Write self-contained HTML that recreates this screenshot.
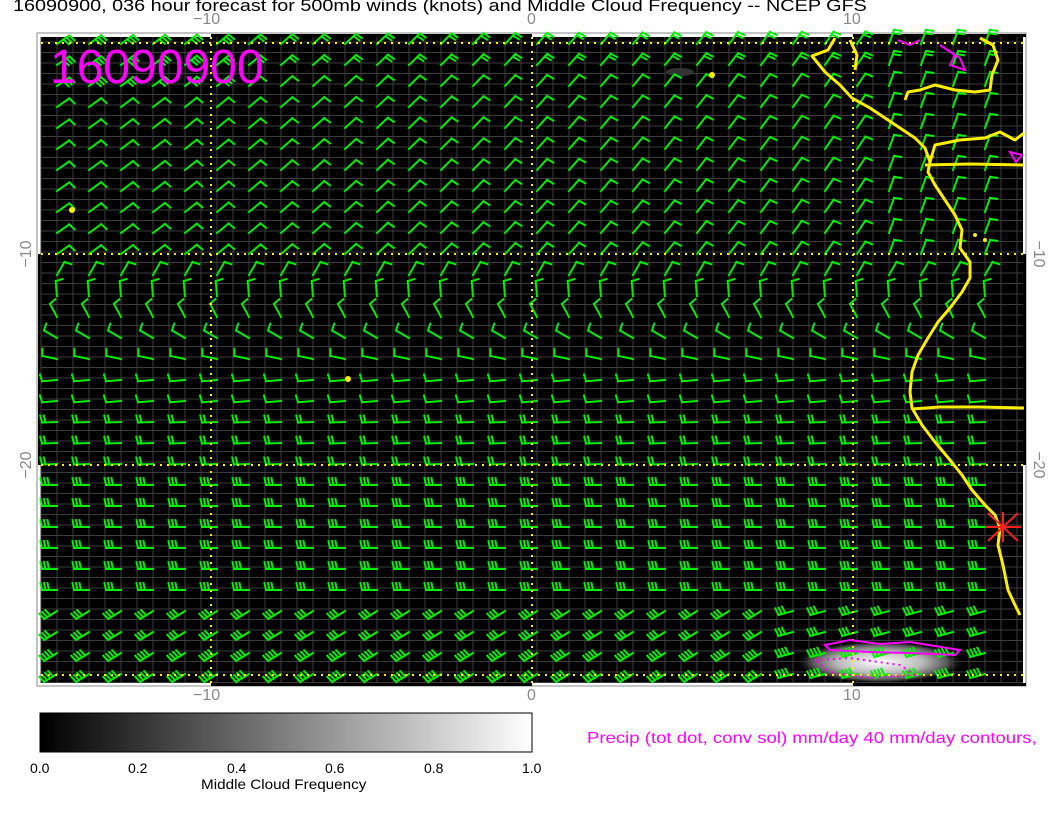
<!DOCTYPE html>
<html><head><meta charset="utf-8"><style>
html,body{margin:0;padding:0;background:#fff;width:1056px;height:816px;overflow:hidden;font-family:"Liberation Sans",sans-serif}
.t{position:absolute;white-space:nowrap;color:#000;transform-origin:0 0}
.g{color:#888}
</style></head><body>
<svg id="s" width="1056" height="816" style="position:absolute;left:0;top:0" xmlns="http://www.w3.org/2000/svg">
<defs>
<radialGradient id="cl" cx="50%" cy="55%" r="50%">
<stop offset="0" stop-color="#fff"/><stop offset="0.5" stop-color="#bbb"/><stop offset="0.8" stop-color="#555"/><stop offset="1" stop-color="#000" stop-opacity="0"/>
</radialGradient>
<linearGradient id="cb" x1="0" x2="1"><stop offset="0" stop-color="#000"/><stop offset="1" stop-color="#fff"/></linearGradient>
</defs>
<rect x="37" y="33" width="989" height="653" fill="#fff" stroke="#888" stroke-width="1"/>
<g fill="#000">
<rect x="211" y="34" width="321" height="3"/><rect x="853" y="34" width="173" height="3"/>
<rect x="211" y="683" width="321" height="3"/><rect x="853" y="683" width="173" height="3"/>
<rect x="38" y="254" width="3" height="211"/><rect x="1023" y="254" width="3" height="211"/>
</g>
<rect x="41" y="37" width="982" height="646" fill="#000"/>
<g id="grid" stroke="#3c3c3c" stroke-width="1"></g>
<ellipse cx="880" cy="660" rx="85" ry="22" fill="url(#cl)"/>
<ellipse cx="680" cy="72" rx="14" ry="4" fill="#333"/>
<g id="barbs" stroke="#00ee00" stroke-width="2" fill="none" stroke-linecap="square"></g>
<g stroke="#ffee00" stroke-width="2" stroke-dasharray="2,5" fill="none">
<line x1="211" y1="37" x2="211" y2="683"/><line x1="532" y1="37" x2="532" y2="683"/><line x1="853" y1="37" x2="853" y2="683"/>
<line x1="41" y1="43" x2="1023" y2="43"/><line x1="41" y1="254" x2="1023" y2="254"/><line x1="41" y1="465" x2="1023" y2="465"/><line x1="41" y1="675" x2="1023" y2="675"/>
</g>
<g stroke="#ffee00" stroke-width="3" fill="none" stroke-linejoin="round">
<path d="M835 38 L828 50 L812 56 L825 72 L840 85 L852 98 L870 108 L885 118 L900 128 L915 138 L925 148 L930 162 L928 172 L935 185 L945 200 L955 215 L962 230 L960 248 L970 262 L970 278 L962 292 L950 308 L938 322 L928 338 L918 355 L912 372 L910 392 L912 408 L922 425 L935 442 L950 460 L962 475 L972 490 L985 505 L995 515 L1000 528 L998 545 L1003 565 L1008 590 L1015 605 L1020 615"/>
<path d="M912 409 L940 407 L980 407 L1024 408"/>
<path d="M925 165 L970 164 L1024 165"/>
<path d="M930 162 L935 145 L960 140 L985 138 L1000 132 L1015 140 L1024 133"/>
<path d="M905 100 L908 92 L920 90 L935 85 L955 90 L975 92 L990 90 L992 75 L998 60 L993 45 L980 38"/>
<path d="M850 40 L857 55 L855 70"/>
</g>
<g fill="#ffee00"><circle cx="72" cy="210" r="3"/><circle cx="348" cy="379" r="3"/><circle cx="712" cy="75" r="3"/><circle cx="975" cy="235" r="2"/><circle cx="985" cy="240" r="2"/></g>
<g stroke="#ff00ff" stroke-width="2" fill="none">
<path d="M898 40 L910 45 L920 40"/><path d="M940 45 L955 55 L950 65 L965 70 L960 58 L948 50"/>
<path d="M1010 152 L1022 155 L1016 162 Z"/>
<path d="M825 645 L850 640 L880 644 L910 642 L935 646 L960 650 L955 655 L910 653 L870 652 L830 650 Z"/>
</g>
<g stroke="#ff00ff" stroke-width="2" stroke-dasharray="2,4" fill="none">
<path d="M815 660 L850 658 L900 665 L915 675 L870 678 L830 672 Z"/>
</g>
<g stroke="#ff2020" stroke-width="2"><line x1="988" y1="513" x2="1018" y2="541"/><line x1="988" y1="541" x2="1018" y2="513"/><line x1="985" y1="527" x2="1021" y2="527"/><line x1="1003" y1="512" x2="1003" y2="542"/></g>
<rect x="40" y="713" width="492" height="39" fill="url(#cb)" stroke="#000" stroke-width="1"/>
<g font-family="Liberation Sans" font-size="16" fill="#888" text-anchor="middle">
<text transform="translate(31,254) rotate(-90)">−10</text><text transform="translate(31,465) rotate(-90)">−20</text>
<text transform="translate(1034,254) rotate(90)">−10</text><text transform="translate(1034,465) rotate(90)">−20</text>
</g>
</svg>
<div class="t" style="left:13px;top:-4px;font-size:17px;transform:scaleX(1.165)">16090900, 036 hour forecast for 500mb winds (knots) and Middle Cloud Frequency -- NCEP GFS</div>
<div class="t g" style="left:193px;top:11px;font-size:16px">−10</div>
<div class="t g" style="left:527px;top:11px;font-size:16px">0</div>
<div class="t g" style="left:843px;top:11px;font-size:16px">10</div>
<div class="t g" style="left:193px;top:687px;font-size:16px">−10</div>
<div class="t g" style="left:527px;top:687px;font-size:16px">0</div>
<div class="t g" style="left:843px;top:687px;font-size:16px">10</div>
<div class="t" style="left:50px;top:40px;font-size:48px;color:#ff00ff">16090900</div>
<div class="t" style="left:30px;top:760px;font-size:14px">0.0</div>
<div class="t" style="left:128px;top:760px;font-size:14px">0.2</div>
<div class="t" style="left:227px;top:760px;font-size:14px">0.4</div>
<div class="t" style="left:325px;top:760px;font-size:14px">0.6</div>
<div class="t" style="left:424px;top:760px;font-size:14px">0.8</div>
<div class="t" style="left:522px;top:760px;font-size:14px">1.0</div>
<div class="t" style="left:201px;top:776px;font-size:14px;transform:scaleX(1.09)">Middle Cloud Frequency</div>
<div class="t" style="left:587px;top:730px;font-size:16px;color:#ff00ff;transform:scaleX(1.16)">Precip (tot dot, conv sol) mm/day 40 mm/day contours,</div>
<script>
var g=document.getElementById("grid"),b=document.getElementById("barbs");
var s="";
for(var x=41;x<1023;x+=16)s+='<line x1="'+x+'" y1="37" x2="'+x+'" y2="683"/>';
for(var y=42;y<683;y+=10.5)s+='<line x1="41" y1="'+y.toFixed(1)+'" x2="1023" y2="'+y.toFixed(1)+'"/>';
g.innerHTML=s;
var o="";
for(var r=0;r<31;r++){
 for(var c=0;c<31;c++){
  var sx=57+c*32, sy=44+r*21;
  if(sx>1015)continue;
  var ang,n;
  if(r<=10){ang=-35-(c/30)*25; n=(r<3&&c<6)?3:(r<2?2:1); if(c>25)ang=-70;}
  else if(r==11){ang=-60;n=1;}
  else if(r==12){ang=-95;n=1;}
  else if(r==13){ang=-118;n=1;}
  else if(r==14){ang=-150;n=1;}
  else if(r==15){ang=-168;n=1;}
  else if(r<=17){ang=175;n=1;}
  else if(r<=20){ang=178;n=2;}
  else if(r<=26){ang=180;n=3;}
  else {ang=(c>22)?165:148;n=3+(r>28?1:0);}
  var a=ang*Math.PI/180, dx=Math.cos(a), dy=Math.sin(a), L=15;
  var ex=sx+dx*L, ey=sy+dy*L;
  o+='<line x1="'+sx+'" y1="'+sy+'" x2="'+ex.toFixed(1)+'" y2="'+ey.toFixed(1)+'"/>';
  for(var k=0;k<n;k++){
   var tx=ex-dx*k*3.5, ty=ey-dy*k*3.5;
   o+='<line x1="'+tx.toFixed(1)+'" y1="'+ty.toFixed(1)+'" x2="'+(tx-dy*7+dx*1.5).toFixed(1)+'" y2="'+(ty+dx*7+dy*1.5).toFixed(1)+'"/>';
  }
 }
}
b.innerHTML=o;
</script>
</body></html>
